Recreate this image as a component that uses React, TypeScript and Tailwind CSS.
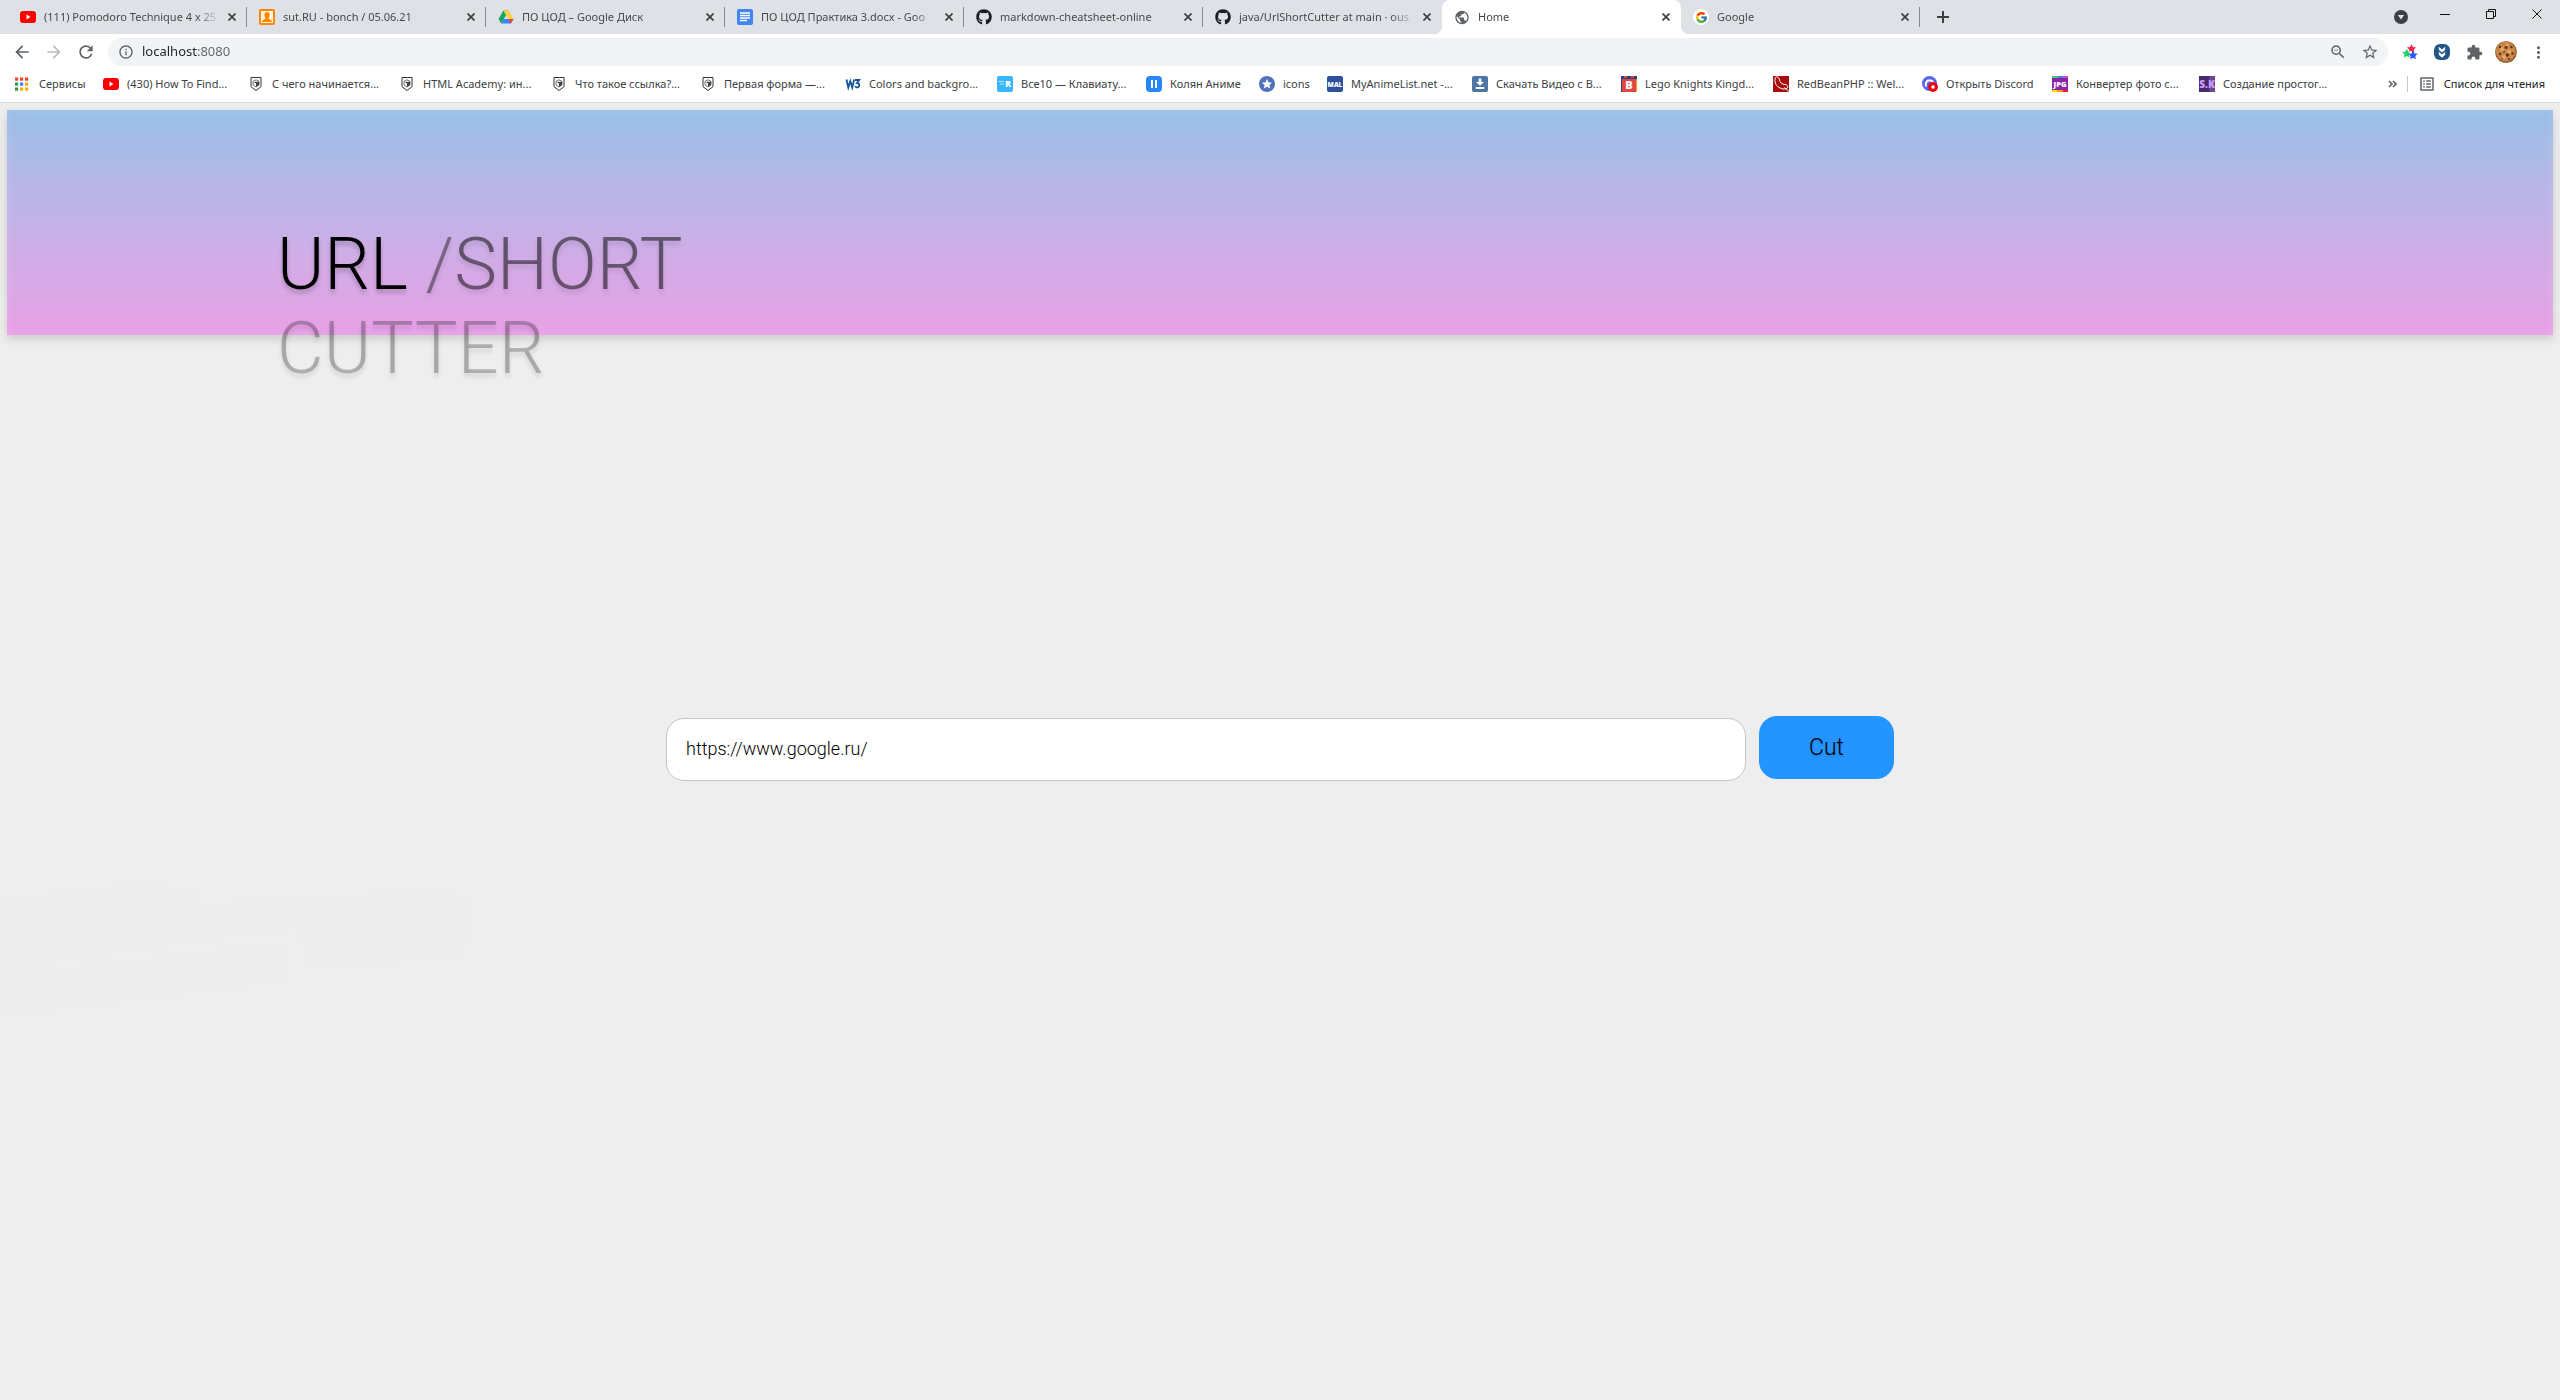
import React from "react";
import {
  MdArrowBack, MdArrowForward, MdRefresh, MdInfoOutline, MdZoomOut, MdStarBorder,
  MdExtension, MdMoreVert, MdOutlineListAlt, MdPublic,
} from "react-icons/md";
import { FaGithub } from "react-icons/fa";
import { FcGoogle } from "react-icons/fc";

const svg = { width: 16, height: 16, viewBox: "0 0 16 16", "aria-hidden": true } as const;

const YouTube = () => (
  <svg {...svg}><rect y="2" width="16" height="12" rx="3" fill="#f00" /><path d="M6.500 5.500v5l4-2.500z" fill="#fff" /></svg>
);
const Student = () => (
  <svg {...svg}>
    <rect x="1" y="1" width="14" height="14" rx="1" fill="#fff4e4" stroke="#ff8800" strokeWidth="2" />
    <path d="M8 3c2 0 2.800 1.400 2.600 3.200C10.500 7.500 9.600 8.300 9.600 9.500L13 12v1H3v-1l3.400-2.500c0-1.200-.9-2-1-3.300C5.200 4.400 6 3 8 3z" fill="#ff8800" />
  </svg>
);
const Drive = () => (
  <svg {...svg}>
    <path d="M5.300 1.500h5.400L8 6.200 3.200 14.500.6 10z" fill="#11a861" />
    <path d="M5.300 1.500h5.400L15.500 10h-5.300z" fill="#ffcf48" />
    <path d="M5.600 10h9.900l-2.700 4.500H3.100z" fill="#3f84f5" />
    <path d="M10.200 10h5.300l-2.700 4.500z" fill="#ea4335" />
  </svg>
);
const Docs = () => (
  <svg {...svg}><rect width="16" height="16" rx="2" fill="#4285f4" /><path d="M3 4h10M3 6.500h10M3 9h10M3 11.500h7" stroke="#fff" strokeWidth="1.400" /></svg>
);
const GoogleBadge = () => (
  <span className="flex size-4 items-center justify-center rounded-full bg-white"><FcGoogle size={13} /></span>
);
const Apps = () => (
  <svg {...svg}>
    {["#f0442f", "#f0442f", "#f0442f", "#2d9a50", "#3b82f0", "#f9ab00", "#2d9a50", "#f9ab00", "#f9ab00"].map((c, i) => (
      <rect key={i} x={(i % 3) * 5} y={1.500 + Math.floor(i / 3) * 5} width="3.200" height="3.200" fill={c} />
    ))}
  </svg>
);
const Shield = () => (
  <svg {...svg}>
    <path d="M3 1.500h10v9.200L8 14.500l-5-3.800z" fill="#fff" stroke="#333" />
    <path d="M8 3.800l3 1.600v3.500L8 11 5 8.900V5.400z" fill="#fff" stroke="#444" strokeWidth=".8" />
    <path d="M8 6.500l3-1.200v3.600L8 11zM6 6.500l2-1 1 .8-1.500 1z" fill="#444" />
  </svg>
);
const Badge = ({ bg, children }: { bg: string; children: React.ReactNode }) => (
  <svg {...svg}><rect width="16" height="16" rx="2" fill={bg} />{children}</svg>
);
const Label = ({ x = 8, y = 11, s, fill = "#fff", children }: { x?: number; y?: number; s: number; fill?: string; children: string }) => (
  <text x={x} y={y} fontSize={s} fontWeight="800" textAnchor="middle" fill={fill} fontFamily="Open Sans, sans-serif">{children}</text>
);
const W3 = () => (
  <svg {...svg} fill="none" stroke="#10559a" strokeWidth="1.800">
    <path d="M1.500 3.500l1.800 8 2-6.500 2 6.500 1.800-8" /><path d="M10 4h4.200l-2.200 3c3 0 3 4.500.2 4.500-1 0-1.700-.5-2-1.500" />
  </svg>
);
const AllTen = () => (
  <Badge bg="#38b6ff"><path d="M1.500 5.500h5.500M3 8h4" stroke="#b9e5ff" strokeWidth="1" /><Label x={11} s={9}>R</Label></Badge>
);
const Pause = () => (
  <svg {...svg}><rect width="16" height="16" rx="4" fill="#2787f5" /><path d="M6 4v8M10 4v8" stroke="#fff" strokeWidth="2" /></svg>
);
const StarDisc = () => (
  <svg {...svg}><circle cx="8" cy="8" r="8" fill="#5272b8" /><path d="M8 3l1.500 3.300 3.600.4-2.700 2.400.8 3.500L8 10.800l-3.200 1.800.8-3.500-2.700-2.400 3.600-.4z" fill="#fff" /></svg>
);
const Mal = () => <Badge bg="#2e51a2"><Label y={10.500} s={6.500}>MAL</Label></Badge>;
const Save = () => (
  <Badge bg="#4c75a3"><path d="M6.700 2.500h2.600V6H12L8 9.800 4 6h2.700zM3.800 11h8.400v2H3.800z" fill="#fff" /></Badge>
);
const Lego = () => (
  <svg {...svg}><path d="M0 0h16v16H0z" fill="#e0483e" /><path d="M0 0h3v2h3V0h4v2h3V0h3v3H1v13H0z" fill="#29418c" /><path d="M15 3h1v13h-1z" fill="#f0a030" /><Label y={13} s={11}>B</Label></svg>
);
const Bean = () => (
  <svg {...svg}><path d="M0 0h16v16H0z" fill="#a80d10" /><path d="M2.500 1.500C1 5 2.500 9.500 6 11.500s7 2 8.500.3c1-1.300-.3-3.300-2.500-3.300C9 8.500 7 6.500 6.500 4S3.500-.5 2.500 1.500zM11.500 11.500L16 15.500" fill="none" stroke="#fff" strokeWidth="1" /></svg>
);
const Discord = () => (
  <svg {...svg}><circle cx="7.500" cy="7.500" r="7.500" fill="#5865f2" /><path d="M4 10.500c-.8-3 .5-5.500 2-6l3 0c1.500.5 2.500 2.500 2 5" fill="none" stroke="#fff" strokeWidth="2" /><circle cx="11" cy="11" r="5" fill="#e60a14" /><circle cx="11" cy="11" r="1.800" fill="#fff" /></svg>
);
const Jpg = () => (
  <svg {...svg}><path d="M0 0h16v16H0z" fill="#8e24aa" /><path d="M0 0h6v2H0z" fill="#4dc77a" /><path d="M6 0h5v2H6z" fill="#3f7fe0" /><path d="M11 0h5v2h-5z" fill="#d84ad0" /><path d="M0 14h5v2H0z" fill="#ffe000" /><path d="M5 14h6v2H5z" fill="#ff9800" /><path d="M11 14h5v2h-5z" fill="#f5143c" /><Label s={7.500}>JPG</Label></svg>
);
const Sk = () => (
  <svg {...svg}><path d="M0 0h16v16H0z" fill="#46286c" /><path d="M10 0h6v16h-6z" fill="#6a4590" /><Label y={12} s={10} fill="#cf9dff">S.K</Label></svg>
);

const Stars = () => {
  const star = "M0-4.800l1.400 3 3.300.4-2.400 2.200.6 3.300L0 2.500l-2.900 1.600.6-3.300-2.400-2.200 3.300-.4z";
  return (
    <svg {...svg}>
      <path d={star} transform="translate(9.500 4.800)" fill="#f5264d" />
      <path d={star} transform="translate(4.800 9.500)" fill="#12d668" />
      <path d={star} transform="translate(11 11.200)" fill="#2d55f0" />
      <circle cx="8.300" cy="8.300" r="1.200" fill="#fff" />
    </svg>
  );
};
const Chevrons = () => (
  <svg {...svg}><rect width="16" height="16" rx="6" fill="#22568a" /><path d="M4.800 2.800L8 5.500l3.200-2.700v3L8 8.600 4.800 5.800zM4.800 7.800L8 10.500l3.200-2.700v3L8 13.700l-3.200-2.900z" fill="#fff" /></svg>
);
const Cookie = () => (
  <svg width="22" height="22" viewBox="0 0 22 22" aria-hidden>
    <circle cx="11" cy="11" r="10.800" fill="#8f5526" /><circle cx="10.800" cy="10.500" r="10" fill="#c98648" />
    <g fill="#e0a868"><circle cx="7" cy="8" r="2.200" /><circle cx="14" cy="11" r="2.300" /><circle cx="9" cy="16" r="2" /><circle cx="12" cy="3.500" r="1.500" /></g>
    <g fill="#5c321c"><circle cx="5" cy="6" r="1.200" /><circle cx="11" cy="6.500" r="1.400" /><circle cx="16.500" cy="6" r="1.200" /><circle cx="17.500" cy="12.500" r="1.200" /><circle cx="12.500" cy="14" r="1.700" /><circle cx="5" cy="13" r="1.200" /><circle cx="9" cy="10.800" r=".9" /><circle cx="14" cy="18" r="1" /><circle cx="7" cy="18" r=".8" /></g>
  </svg>
);

const tabs = [
  { icon: <YouTube />, title: "(111) Pomodoro Technique 4 x 25" },
  { icon: <Student />, title: "sut.RU - bonch / 05.06.21" },
  { icon: <Drive />, title: "ПО ЦОД – Google Диск" },
  { icon: <Docs />, title: "ПО ЦОД Практика 3.docx - Goo" },
  { icon: <FaGithub size={16} color="#1b1f23" />, title: "markdown-cheatsheet-online" },
  { icon: <FaGithub size={16} color="#1b1f23" />, title: "java/UrlShortCutter at main · ous" },
  { icon: <MdPublic size={17} color="#5f6368" />, title: "Home", active: true },
  { icon: <GoogleBadge />, title: "Google" },
];

const bookmarks = [
  { icon: <Apps />, title: "Сервисы", w: "w-[88px]" },
  { icon: <YouTube />, title: "(430) How To Find...", w: "w-[145px]" },
  { icon: <Shield />, title: "С чего начинается...", w: "w-[151px]" },
  { icon: <Shield />, title: "HTML Academy: ин...", w: "w-[152px]" },
  { icon: <Shield />, title: "Что такое ссылка?...", w: "w-[149px]" },
  { icon: <Shield />, title: "Первая форма —...", w: "w-[145px]" },
  { icon: <W3 />, title: "Colors and backgro...", w: "w-[152px]" },
  { icon: <AllTen />, title: "Все10 — Клавиату...", w: "w-[149px]" },
  { icon: <Pause />, title: "Колян Аниме", w: "w-[113px]" },
  { icon: <StarDisc />, title: "icons", w: "w-[68px]" },
  { icon: <Mal />, title: "MyAnimeList.net -...", w: "w-[145px]" },
  { icon: <Save />, title: "Скачать Видео с В...", w: "w-[149px]" },
  { icon: <Lego />, title: "Lego Knights Kingd...", w: "w-[152px]" },
  { icon: <Bean />, title: "RedBeanPHP :: Wel...", w: "w-[149px]" },
  { icon: <Discord />, title: "Открыть Discord", w: "w-[130px]" },
  { icon: <Jpg />, title: "Конвертер фото с...", w: "w-[147px]" },
  { icon: <Sk />, title: "Создание простог...", w: "w-[140px]" },
];

const ToolButton = ({ label, children }: { label: string; children: React.ReactNode }) => (
  <button aria-label={label} className="flex h-7 w-8 shrink-0 items-center justify-center text-[#5f6368]">{children}</button>
);

function TabStrip() {
  return (
    <div className="flex h-[34px] items-stretch bg-[#dee1e6] pl-2 text-[11px] text-[#45494d]">
      {tabs.map((tab, i) => {
        const divider = !tab.active && !tabs[i + 1]?.active;
        return (
          <div key={i} className={tab.active ? "relative flex w-[239px] items-center rounded-t-lg bg-white pl-3" : "flex w-[239px] items-center pl-3"}>
            {tab.active && (
              <>
                <span className="absolute bottom-0 -left-2 size-2 bg-[radial-gradient(circle_at_0_0,#dee1e6_8px,#fff_8px)]" />
                <span className="absolute -right-2 bottom-0 size-2 bg-[radial-gradient(circle_at_100%_0,#dee1e6_8px,#fff_8px)]" />
              </>
            )}
            <span className="flex w-4 shrink-0 justify-center">{tab.icon}</span>
            <a href="#" className="ml-2 flex-1 overflow-hidden whitespace-nowrap [mask-image:linear-gradient(90deg,#000_calc(100%-24px),transparent)]">{tab.title}</a>
            <button aria-label="Закрыть" className="ml-1 flex size-4 items-center justify-center">
              <svg width="8" height="8" viewBox="0 0 8 8" stroke="#3c4043" strokeWidth="1.700"><path d="M.5.500l7 7M7.500.500l-7 7" /></svg>
            </button>
            <span className={divider ? "ml-1.5 h-5 w-px bg-[#85898e]" : "ml-1.5 h-5 w-px"} />
          </div>
        );
      })}
      <button aria-label="Новая вкладка" className="flex w-[46px] items-center justify-center">
        <svg width="12" height="12" viewBox="0 0 12 12" stroke="#3c4043" strokeWidth="2"><path d="M6 0v12M0 6h12" /></svg>
      </button>
      <div className="flex-1" />
      <button aria-label="Поиск вкладок" className="flex w-[42px] items-center justify-center">
        <svg width="14" height="14" viewBox="0 0 14 14"><circle cx="7" cy="7" r="7" fill="#3c4043" /><path d="M3.800 5h6.400L7 9.500z" fill="#dee1e6" /></svg>
      </button>
      {["M0 5.500h10", "M.5 2.500h7v7h-7zM2.500 2.500v-2h7v7h-2", "M.5.500l9 9M9.500.500l-9 9"].map((d, i) => (
        <button key={d} aria-label={["Свернуть", "Развернуть", "Закрыть окно"][i]} className="flex h-7 w-[46px] items-center justify-center">
          <svg width="10" height="10" viewBox="0 0 10 10" fill="none" stroke="#111"><path d={d} /></svg>
        </button>
      ))}
    </div>
  );
}

function Toolbar() {
  return (
    <div className="flex h-9 items-center bg-white px-1.5">
      <ToolButton label="Назад"><MdArrowBack size={20} /></ToolButton>
      <ToolButton label="Вперёд"><MdArrowForward size={20} className="text-[#babcbe]" /></ToolButton>
      <ToolButton label="Обновить"><MdRefresh size={20} /></ToolButton>
      <div className="mx-1.5 flex h-7 flex-1 items-center rounded-full bg-[#f1f3f4] pr-0.5 pl-2.5">
        <MdInfoOutline size={16} color="#5f6368" />
        <input
          aria-label="Адрес"
          defaultValue="localhost:8080"
          className="ml-2 flex-1 bg-[linear-gradient(90deg,#202124_56px,#5f6368_56px)] bg-clip-text text-[13px] text-transparent outline-none"
        />
        <ToolButton label="Масштаб"><MdZoomOut size={18} /></ToolButton>
        <ToolButton label="Добавить в закладки"><MdStarBorder size={18} /></ToolButton>
      </div>
      <ToolButton label="Звёзды"><Stars /></ToolButton>
      <ToolButton label="Загрузки"><Chevrons /></ToolButton>
      <ToolButton label="Расширения"><MdExtension size={17} /></ToolButton>
      <ToolButton label="Профиль"><Cookie /></ToolButton>
      <ToolButton label="Меню"><MdMoreVert size={19} /></ToolButton>
    </div>
  );
}

function Bookmarks() {
  return (
    <nav className="flex h-[33px] items-center border-b border-[#d5d7da] bg-white px-[15px] pb-1 text-[11px] text-[#3c4043]">
      {bookmarks.map((b) => (
        <a key={b.title} href="#" className={`flex shrink-0 items-center gap-2 whitespace-nowrap ${b.w}`}>{b.icon}<span>{b.title}</span></a>
      ))}
      <div className="flex-1" />
      <button aria-label="Ещё закладки" className="mr-2.5">
        <svg width="9" height="8" viewBox="0 0 9 8" fill="none" stroke="#5f6368" strokeWidth="1.600"><path d="M1 1l3 3-3 3M5 1l3 3-3 3" /></svg>
      </button>
      <span className="mr-2.5 h-4 w-px bg-[#c4c7ca]" />
      <a href="#" className="flex items-center gap-2 whitespace-nowrap text-[#202124]"><MdOutlineListAlt size={18} color="#5f6368" />Список для чтения</a>
    </nav>
  );
}

export default function App() {
  return (
    <div className="min-h-screen bg-[#eee] font-['Noto_Sans',sans-serif]">
      <TabStrip />
      <Toolbar />
      <Bookmarks />
      <main className="relative px-[7px] pt-[7px] font-['Roboto',sans-serif] font-light text-black">
        <svg className="absolute top-[777px] left-0" width="480" height="140" viewBox="0 0 480 140" fill="#ededed" aria-hidden>
          <path d="M0 20L140 2l55 6v16l90-5 155-10 35 12-5 40-10 18-150 8-15-38L0 90z" />
          <path d="M0 95l290-34-3 40L0 137z" />
        </svg>
        <header className="h-[225px] bg-linear-to-b from-[#98c0e7] to-[#e8a0e6] pt-[113px] pl-[270px] shadow-[0_4px_9px_rgba(0,0,0,0.15),inset_0_0_12px_rgba(255,220,255,0.15)]">
          <h1 className="w-[450px] text-[72px] leading-[84px] text-shadow-[0_4px_4px_rgba(0,0,0,0.2)]">
            URL <span className="text-black/40 text-shadow-[0_4px_4px_rgba(0,0,0,0.1)]">/</span>
            <span className="text-black/50 text-shadow-[0_4px_4px_rgba(0,0,0,0.1)]">SHORT</span>{" "}
            <span className="text-black/25 text-shadow-[0_4px_4px_rgba(0,0,0,0.1)]">CUTTER</span>
          </h1>
        </header>
        <form className="mx-auto mt-[381px] flex max-w-[1228px] items-start gap-[13px]" onSubmit={(e) => e.preventDefault()}>
          <input
            aria-label="URL"
            defaultValue="https://www.google.ru/"
            className="mt-0.5 h-[63px] min-w-0 flex-1 rounded-[18px] border border-[#c4c4c4] bg-white px-[19px] pb-0.5 text-[18px] outline-none"
          />
          <button className="h-[63px] w-[135px] rounded-[18px] bg-[#2494ff] pt-0.5 text-[23px] text-shadow-[0_2px_2px_rgba(0,0,0,0.15)]">Cut</button>
        </form>
      </main>
    </div>
  );
}
